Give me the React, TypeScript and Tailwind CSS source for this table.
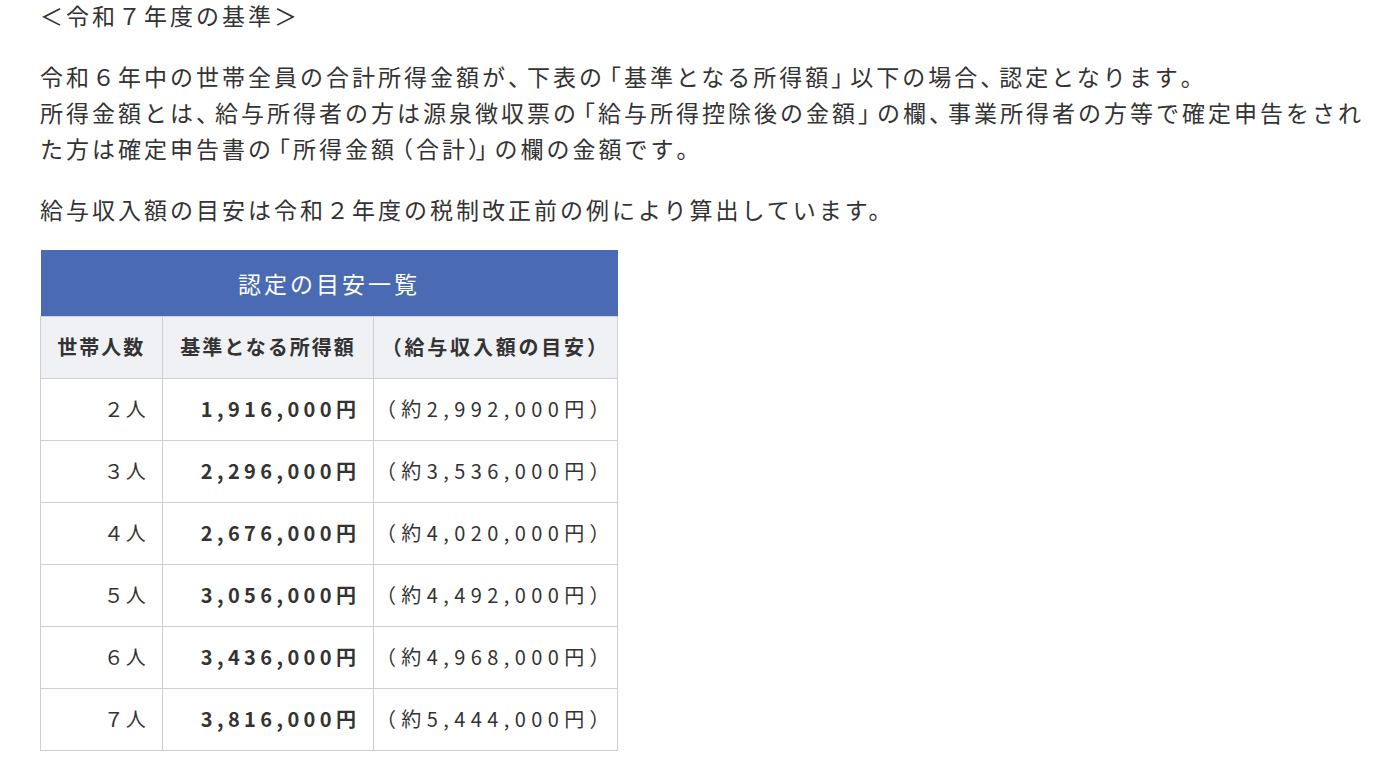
const rows: Array<[string, string, string]> = [
  ['２人', '1,916,000円', '（約2,992,000円）'],
  ['３人', '2,296,000円', '（約3,536,000円）'],
  ['４人', '2,676,000円', '（約4,020,000円）'],
  ['５人', '3,056,000円', '（約4,492,000円）'],
  ['６人', '3,436,000円', '（約4,968,000円）'],
  ['７人', '3,816,000円', '（約5,444,000円）'],
]

const OPEN = '「（'
const CLOSE = '」）、'

// The original font sets brackets and commas tighter than a full em.
// Pull the spacing in by giving the char before an opening bracket,
// and each closing mark, a negative letter-spacing.
function Jp({ text }: { text: string }) {
  const chars = Array.from(text)
  return (
    <>
      {chars.map((ch, i) => {
        const next = chars[i + 1] ?? ''
        if (CLOSE.includes(ch) || OPEN.includes(next)) {
          return (
            <span key={i} className="tracking-[-4px]">
              {ch}
            </span>
          )
        }
        return ch
      })}
    </>
  )
}

export default function App() {
  return (
    <div className="min-h-screen bg-white pl-[40px] font-['Noto_Sans_CJK_JP',sans-serif] text-[#333]">
      <div className="text-[23px] leading-[36px] tracking-[3px] -mt-[3px]">
        <p>＜令和７年度の基準＞</p>
        <p className="mt-[25px]">
          <Jp text="令和６年中の世帯全員の合計所得金額が、下表の「基準となる所得額」以下の場合、認定となります。" />
          <br />
          <Jp text="所得金額とは、給与所得者の方は源泉徴収票の「給与所得控除後の金額」の欄、事業所得者の方等で確定申告をされた方は確定申告書の「所得金額（合計）」の欄の金額です。" />
        </p>
        <p className="mt-[25px]">給与収入額の目安は令和２年度の税制改正前の例により算出しています。</p>
      </div>

      <table className="mt-[23px] w-[578px] border-collapse text-[20px] tracking-[0.1em]">
        <thead>
          <tr>
            <th
              colSpan={3}
              className="h-[66px] bg-[#4a6bb3] text-center text-[23px] font-normal tracking-[3px] text-white"
            >
              認定の目安一覧
            </th>
          </tr>
          <tr className="h-[62px] bg-[#f0f1f5]">
            <th className="w-[122px] border border-[#cfcfcf] text-center font-bold">世帯人数</th>
            <th className="w-[212px] border border-[#cfcfcf] text-center font-bold">基準となる所得額</th>
            <th className="w-[244px] border border-[#cfcfcf] text-center font-bold tracking-[0.14em]">
              （給与収入額の目安）
            </th>
          </tr>
        </thead>
        <tbody>
          {rows.map(([n, base, wage]) => (
            <tr key={n} className="h-[62px]">
              <td className="border border-[#cfcfcf] pr-[14px] text-right">{n}</td>
              <td className="border border-[#cfcfcf] pr-[13px] text-right font-bold tracking-[0.22em]">{base}</td>
              <td className="border border-[#cfcfcf] pr-[2px] text-right tracking-[0.27em]">{wage}</td>
            </tr>
          ))}
        </tbody>
      </table>
    </div>
  )
}
